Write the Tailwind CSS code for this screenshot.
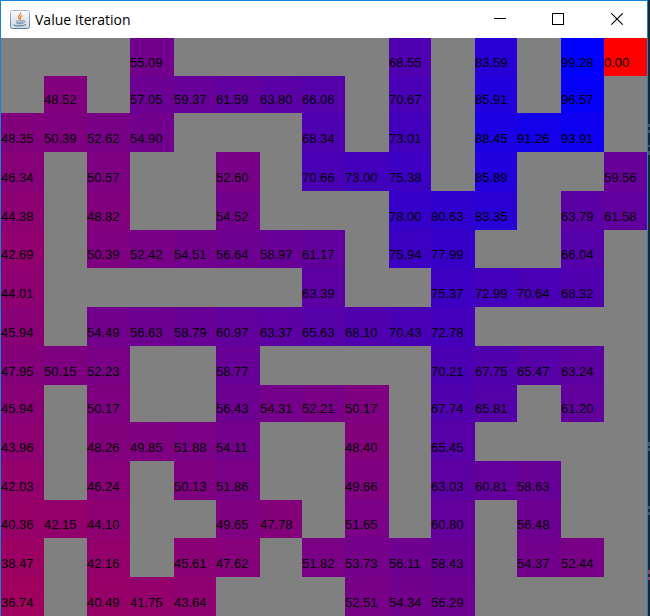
<!DOCTYPE html>
<html lang="en">
<head>
<meta charset="utf-8">
<meta name="viewport" content="width=device-width, initial-scale=1">
<title>Value Iteration</title>
<script src="https://cdn.jsdelivr.net/npm/@tailwindcss/browser@4"></script>
</head>
<body class="h-screen flex bg-[#20252a] overflow-hidden">
<main class="flex-1 min-w-0 flex flex-col border-t border-x border-[#1883d7] bg-white">
  <header class="h-[37px] shrink-0 flex items-center pl-[9px] gap-[5px]">
    <svg class="size-5 shrink-0" viewBox="0 0 20 20" aria-hidden="true">
      <defs>
        <linearGradient id="tile" x1="0" y1="0" x2="0" y2="1"><stop offset="0" stop-color="#fdfdfe"/><stop offset=".5" stop-color="#e3e8ee"/><stop offset="1" stop-color="#cfd8e2"/></linearGradient>
        <linearGradient id="edge" x1="0" y1="0" x2="0" y2="1"><stop offset="0" stop-color="#a9b6c2"/><stop offset="1" stop-color="#5f7b97"/></linearGradient>
      </defs>
      <rect x=".5" y=".5" width="19" height="18" rx="2" fill="url(#tile)" stroke="url(#edge)"/>
      <path d="M10.6 3c.4 1.600-2.600 2.400-2.200 4.200.2 1 1 1.400 1.200 2.300M11.800 5.800c-1.800.8-2 1.700-1.200 2.500.4.500.2 1-.2 1.400" fill="none" stroke="#e88a3c" stroke-width="1.300" stroke-linecap="round"/>
      <path d="M5.500 10.500h7.600c0 1.600-.9 3.300-2.200 3.700H7.800c-1.300-.4-2.100-2-2.300-3.700Z" fill="#7f9bb3"/>
      <path d="M6.500 11.800h5.800" stroke="#dbe5ed" stroke-width=".8"/>
      <path d="M13 10.700c2.600-.5 2.700 1.900-.6 2.600" fill="none" stroke="#6a8aa6"/>
      <path d="M4 14.800c1.500 1.500 9.500 1.500 11.500-.2" fill="none" stroke="#5f82a1" stroke-width="1.200" stroke-linecap="round"/>
    </svg>
    <h1 class="flex-1 min-w-0 truncate text-black text-[14px] leading-5 font-['Open_Sans','Noto_Sans',sans-serif]">Value Iteration</h1>
    <div class="flex self-stretch">
      <button type="button" aria-label="Minimize" class="w-[57px] grid place-items-center"><svg class="size-[13px]" viewBox="0 0 13 13" shape-rendering="crispEdges"><path d="M0 5.500h12" stroke="#000"/></svg></button>
      <button type="button" aria-label="Maximize" class="w-[59px] grid place-items-center"><svg class="size-[13px]" viewBox="0 0 13 13" shape-rendering="crispEdges"><path d="M.5 .5h11v11h-11z" fill="none" stroke="#000"/></svg></button>
      <button type="button" aria-label="Close" class="w-[59px] grid place-items-center"><svg class="size-[13px]" viewBox="0 0 13 13"><path d="M.3 .3l11.400 11.400M11.700 .3l-11.400 11.400" stroke="#000" stroke-width="1.100"/></svg></button>
    </div>
  </header>
  <table aria-label="State values" class="flex-1 min-h-0 flex bg-[#808080] text-black text-[13px] leading-4 font-['Liberation_Sans',Arial,sans-serif]">
    <tbody id="values" class="flex-1 grid grid-cols-[43fr_43fr_43fr_44fr_42fr_44fr_42fr_43fr_44fr_42fr_44fr_42fr_44fr_43fr_43fr] grid-rows-[38fr_37fr_39fr_39fr_39fr_38fr_39fr_39fr_39fr_37fr_39fr_39fr_38fr_39fr_39fr]"></tbody>
  </table>
</main>
<aside aria-hidden="true" class="w-[2px] shrink-0">
  <svg class="w-[2px] h-[616px]" viewBox="0 0 2 616"><path d="M1 124v3M1 130v3M1 145v2M1 151v4M1 442v4M1 448v3M1 506v3M1 512v3" stroke="#4d5358" stroke-width="2"/><path d="M1 570v4M1 577v3" stroke="#7c4d5c" stroke-width="2"/></svg>
</aside>
<script>
// One line per grid row; "-" marks a wall.
const rows = `
- - - 55.09 - - - - - 68.55 - 83.59 - 99.28 0.00
- 48.52 - 57.05 59.37 61.59 63.80 66.06 - 70.67 - 85.91 - 96.57 -
48.35 50.39 52.62 54.90 - - - 68.34 - 73.01 - 88.45 91.26 93.91 -
46.34 - 50.57 - - 52.60 - 70.66 73.00 75.38 - 85.89 - - 59.56
44.38 - 48.82 - - 54.52 - - - 78.00 80.63 83.35 - 63.79 61.58
42.69 - 50.39 52.42 54.51 56.64 58.97 61.17 - 75.94 77.99 - - 66.04 -
44.01 - - - - - - 63.39 - - 75.37 72.99 70.64 68.32 -
45.94 - 54.49 56.63 58.79 60.97 63.37 65.63 68.10 70.43 72.78 - - - -
47.95 50.15 52.23 - - 58.77 - - - - 70.21 67.75 65.47 63.24 -
45.94 - 50.17 - - 56.43 54.31 52.21 50.17 - 67.74 65.81 - 61.20 -
43.96 - 48.26 49.85 51.88 54.11 - - 48.40 - 65.45 - - - -
42.03 - 46.24 - 50.13 51.86 - - 49.66 - 63.03 60.81 58.63 - -
40.36 42.15 44.10 - - 49.65 47.78 - 51.65 - 60.80 - 56.48 - -
38.47 - 42.16 - 45.61 47.62 - 51.82 53.73 56.11 58.43 - 54.37 52.44 -
36.74 - 40.49 41.75 43.64 - - - 52.51 54.34 56.29 - - - -`.trim().split("\n").map(r => r.split(" "));
const max = Math.max(...rows.flat().filter(v => v !== "-").map(Number));
const body = document.getElementById("values");
for (const row of rows) {
  const tr = document.createElement("tr");
  tr.className = "contents";
  for (const v of row) {
    const td = document.createElement("td");
    td.className = "flex items-end p-0 pb-[5px] min-w-0 min-h-0";
    if (v !== "-") {
      const blue = Math.round(255 * v / max);
      td.style.backgroundColor = `rgb(${255 - blue}, 0, ${blue})`;
      td.textContent = v;
    }
    tr.append(td);
  }
  body.append(tr);
}
</script>
</body>
</html>
